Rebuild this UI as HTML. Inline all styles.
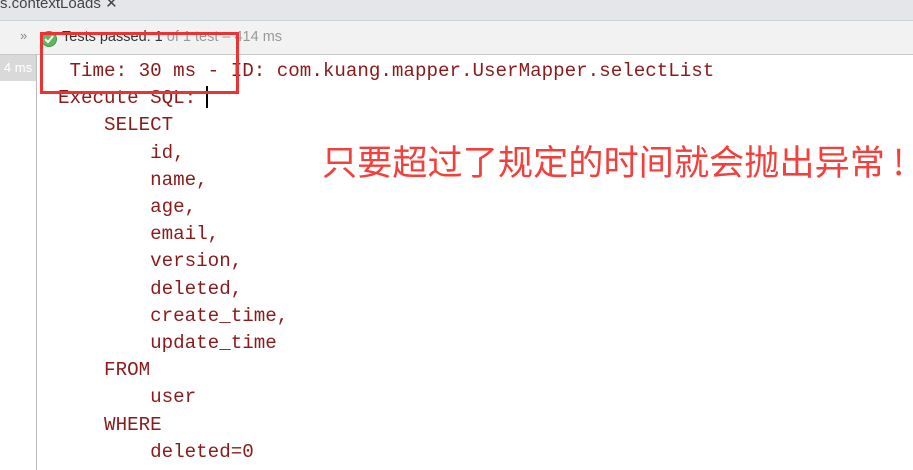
<!DOCTYPE html>
<html><head><meta charset="utf-8"><style>
body{margin:0;width:913px;height:470px;overflow:hidden;background:#fff;position:relative;font-family:"Liberation Sans",sans-serif}
.tab{position:absolute;left:0;top:0;width:913px;height:20px;background:#e4e6ea;border-bottom:1px solid #cfd2d6}
.tab span{position:absolute;left:0;top:-6px;font-size:15px;color:#444}
.tool{position:absolute;left:0;top:21px;width:913px;height:33px;background:#f2f2f2;border-bottom:1px solid #c9c9c9}
.gut{position:absolute;left:0;top:55px;width:36px;height:26px;background:#d9d9d9;color:#fff;font-size:13px;line-height:26px;text-align:center}
.vline{position:absolute;left:36px;top:55px;width:1px;height:415px;background:#bdbdbd}
pre{position:absolute;left:58px;top:58px;margin:0;font-family:"Liberation Mono",monospace;font-size:19.2px;line-height:27.2px;color:#8b1a1a}
.box{position:absolute;left:40px;top:32px;width:193px;height:56px;border:3px solid #ea3434}
.cn{position:absolute;left:322px;top:135px;font-family:"Noto Sans CJK SC",sans-serif;font-size:35.2px;color:#f2403c;white-space:nowrap}
.cur{position:absolute;left:206px;top:86px;width:2px;height:22px;background:#000}
</style></head><body>
<div class="tab"><span>s.contextLoads ✕</span></div>
<div class="tool">
<span style="position:absolute;left:20px;top:7px;font-size:13px;color:#888">»</span>
<svg style="position:absolute;left:40px;top:9px" width="18" height="18"><circle cx="9" cy="9" r="7.5" fill="#5fb85f" stroke="#3f9a3f"/><path d="M5 9l3 3 5-6" stroke="#fff" stroke-width="2" fill="none"/></svg>
<span style="position:absolute;left:62px;top:8px;font-size:14.5px;color:#333">Tests passed: 1 <span style="color:#999">of 1 test – 414 ms</span></span>
</div>
<div class="gut">4 ms</div>
<div class="vline"></div>
<pre> Time: 30 ms - ID: com.kuang.mapper.UserMapper.selectList
Execute SQL:
    SELECT
        id,
        name,
        age,
        email,
        version,
        deleted,
        create_time,
        update_time
    FROM
        user
    WHERE
        deleted=0</pre>
<div class="cur"></div>
<div class="box"></div>
<div class="cn">只要超过了规定的时间就会抛出异常<span style="margin-left:8px">!</span></div>
</body></html>
